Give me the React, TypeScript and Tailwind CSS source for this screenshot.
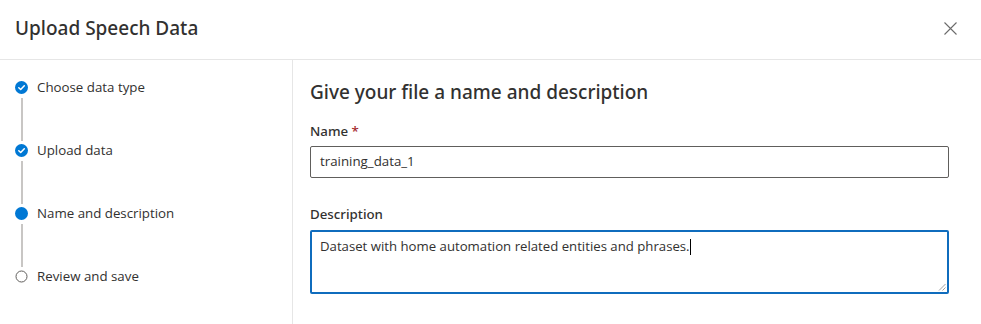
import React from "react";

const font = { fontFamily: '"Segoe UI", "Open Sans", "Noto Sans", sans-serif' };
const headFont = { fontFamily: '"Segoe UI", "Noto Sans", "Open Sans", sans-serif' };

function Check() {
  return (
    <svg width="13" height="13" viewBox="0 0 13 13">
      <circle cx="6.5" cy="6.5" r="6.5" fill="#0078d4" />
      <path d="M3.8 6.7 L5.7 8.5 L9.3 4.7" stroke="#fff" strokeWidth="1.5" fill="none" strokeLinecap="round" strokeLinejoin="round" />
    </svg>
  );
}

function Dot() {
  return (
    <svg width="13" height="13" viewBox="0 0 13 13">
      <circle cx="6.5" cy="6.5" r="6.5" fill="#0078d4" />
    </svg>
  );
}

function Empty() {
  return (
    <svg width="13" height="13" viewBox="0 0 13 13">
      <circle cx="6.5" cy="6.5" r="5.5" fill="#fff" stroke="#605e5c" strokeWidth="1" />
    </svg>
  );
}

const steps = [
  { label: "Choose data type", icon: <Check /> },
  { label: "Upload data", icon: <Check /> },
  { label: "Name and description", icon: <Dot /> },
  { label: "Review and save", icon: <Empty /> },
];

export default function App() {
  return (
    <div className="w-[981px] h-[324px] bg-white text-[#323130] overflow-hidden flex flex-col" style={font}>
      <div className="h-[60px] flex items-center justify-between pl-[15px] pr-[24px] border-b border-[#e6e6e6] shrink-0">
        <div className="text-[19px] font-medium leading-none pb-[2px]" style={headFont}>Upload Speech Data</div>
        <svg width="13" height="13" viewBox="0 0 13 13" className="mt-[-2px]">
          <path d="M0.5 0.5 L12.5 12.5 M12.5 0.5 L0.5 12.5" stroke="#6b6b6b" strokeWidth="1.1" />
        </svg>
      </div>
      <div className="flex flex-1">
        <div className="w-[293px] border-r border-[#e6e6e6] pt-[21px] pl-[15px]">
          {steps.map((s, i) => (
            <div key={s.label} className="flex">
              <div className="flex flex-col items-center w-[13px]">
                <div className="h-[13px]">{s.icon}</div>
                {i < steps.length - 1 && <div className="w-[2px] h-[43px] bg-[#c8c6c4] mt-[4px] mb-[3px]" />}
              </div>
              <div className="ml-[9px] text-[13.3px] leading-[13px]">{s.label}</div>
            </div>
          ))}
        </div>
        <div className="flex-1 pl-[17px] pr-[32px] pt-[20px]">
          <div className="text-[19px] font-medium leading-[24px]" style={headFont}>Give your file a name and description</div>
          <div className="mt-[18px] text-[13.3px] font-medium leading-[18px]" style={headFont}>
            Name <span className="text-[#a4262c]">*</span>
          </div>
          <div className="mt-[6px] h-[32px] border border-[#605e5c] rounded-[2px] flex items-center px-[9px] text-[13.3px]">
            training_data_1
          </div>
          <div className="mt-[27px] text-[13.3px] font-medium leading-[18px]" style={headFont}>Description</div>
          <div className="relative mt-[7px] h-[64px] border-2 border-[#0f6cbd] rounded-[2px] px-[8px] pt-[4px] text-[13.2px] leading-[20px]">
            <span>Dataset with home automation related entities and phrases.</span>
            <span className="inline-block w-[1px] h-[16px] bg-black align-middle ml-[0px]" />
            <svg width="8" height="8" viewBox="0 0 8 8" className="absolute right-[1px] bottom-[1px]">
              <path d="M7.5 1 L1 7.5 M7.5 4.5 L4.5 7.5" stroke="#888" strokeWidth="0.8" />
            </svg>
          </div>
        </div>
      </div>
    </div>
  );
}
